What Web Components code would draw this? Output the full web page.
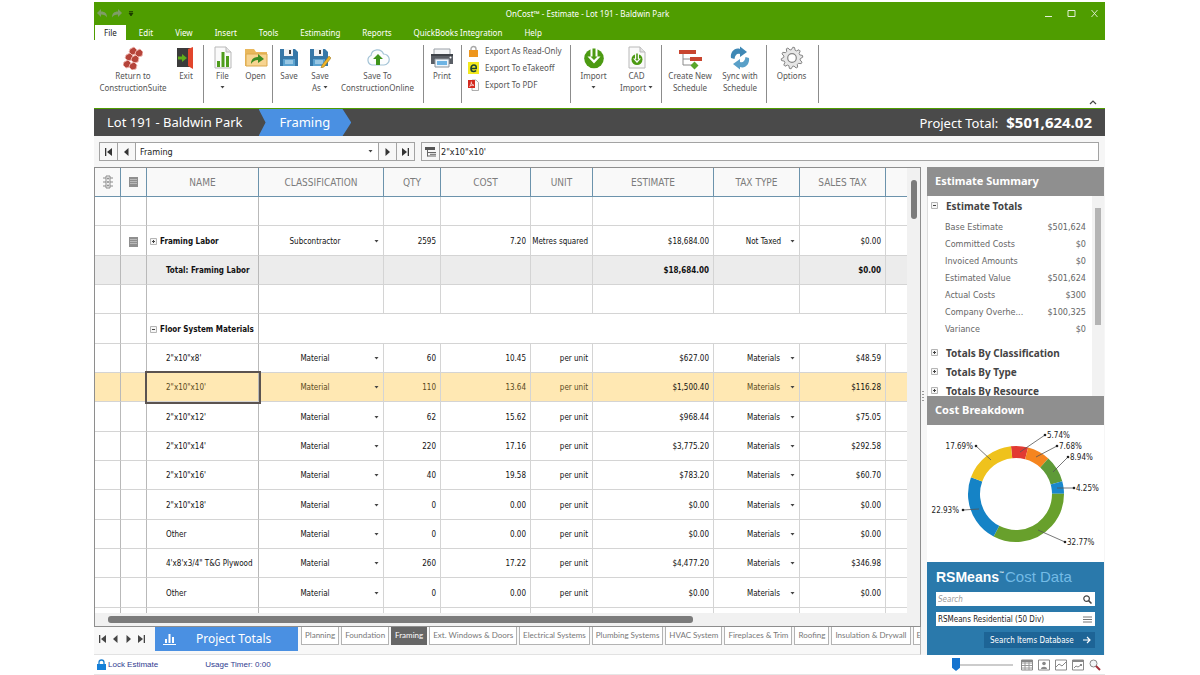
<!DOCTYPE html>
<html lang="en">
<head>
<meta charset="utf-8">
<title>OnCost™ - Estimate - Lot 191 - Baldwin Park</title>
<style>
  :root {
    --green: #4f9d00; --blue: #4a90e2; --dark: #4a4a4a; --line: #d4d4d4; --head-line: #6c93ac;
    --ui: "Noto Sans", "Open Sans", sans-serif;
    --data: "DejaVu Sans Condensed", "DejaVu Sans", sans-serif;
    --sans: "Liberation Sans", Arial, sans-serif;
    --tab: Lato, "Liberation Sans", sans-serif;
  }
  * { box-sizing: border-box; }
  body { margin: 0; background: #fff; font-family: var(--ui); font-size: 8px; color: #333; }
</style>
</head>
<body>
<app-window></app-window>

<script>
const BASE = `*{box-sizing:border-box}button,input,select{font:inherit;color:inherit;margin:0;padding:0;border:0;background:none;border-radius:0;outline:0}svg{display:block}a{color:inherit;text-decoration:none}`;

function define(name, markup, setup) {
  const template = document.createElement('template');
  template.innerHTML = markup.replace('<style>', '<style>' + BASE);
  customElements.define(name, class extends HTMLElement {
    constructor() {
      super();
      this.attachShadow({ mode: 'open' }).append(template.content.cloneNode(true));
    }
    connectedCallback() { if (setup) setup.call(this, this.shadowRoot); }
  });
}

const svg = (w, h, body, box) => `<svg width="${w}" height="${h}" viewBox="${box || `0 0 ${w} ${h}`}" aria-hidden="true">${body}</svg>`;

const hex = (x, y) => `<path d="M${x - 3} ${y - 2}L${x + 1} ${y - 4}L${x + 4} ${y - 1}L${x + 3} ${y + 3}L${x - 1} ${y + 4}L${x - 4} ${y + 1}Z"/>`;
const floppy = `<path d="M1 1h15l3 3v14H1z" fill="#3778a8"/><path d="M5 1h9v7H5z" fill="#f2f4f6"/><path d="M10 2h2v4h-2z" fill="#444"/><path d="M4 11h12v7H4z" fill="#5ba3d0"/><path d="M6 13h8M6 15h8" stroke="#d7ebf7"/>`;
const sheet = (x) => `<path d="M2 1h11l5 5v16H2z" fill="#fafafa" stroke="#b8b8b8"/><path d="M13 1v5h5" fill="#e4e4e4" stroke="#b8b8b8"/>` + x;

/* Outline of a ten-toothed gear centred on 12,12 */
const gearPath = Array.from({ length: 40 }, (_, i) => {
  const a = (i + 0.5) * Math.PI / 20, r = i % 4 < 2 ? 10.8 : 8.3;
  return `${i ? 'L' : 'M'}${(12 + r * Math.sin(a)).toFixed(2)} ${(12 - r * Math.cos(a)).toFixed(2)}`;
}).join('') + 'Z';

const ICONS = {
  suite: svg(20, 24, `<g fill="#b5443a" stroke="#f0b9b2" stroke-width=".9">${hex(10, 5)}${hex(16, 7)}${hex(6, 11)}${hex(12, 13)}${hex(4, 18)}${hex(10, 20)}</g>`),
  exit: svg(20, 24, `<path d="M1 2h13v19H1z" fill="#3b3b3b"/><path d="M12 3l5-2v22l-5-3z" fill="#e2452c"/><path d="M2 10.500h4V8l5 4-5 4v-2.500H2z" fill="#5fae1b"/>`),
  file: svg(20, 24, sheet(`<path d="M4 15h3v6H4zM8.500 6h3v15h-3zM13 10h3v11h-3z" fill="#4f9d1c"/>`)),
  open: svg(24, 24, `<path d="M1 3h9l2 3h11v14H1z" fill="#e9b85c"/><path d="M2 8h21v12H2z" fill="#f7d491" stroke="#dba94c"/><path d="M7 18c0-5 3-7 7-7V8l6 5-6 4v-3c-3 0-5 1-7 4z" fill="#3d8c23"/>`),
  save: svg(20, 20, floppy),
  saveas: svg(22, 20, floppy + `<path d="M20 8l2 2-7 9-3 1 1-3z" fill="#f0b429" stroke="#8d6a1c" stroke-width=".5"/>`),
  cloud: svg(24, 22, `<path d="M6 18a5 5 0 0 1-1-9.500 6.500 6.500 0 0 1 12.500-1.500A5.500 5.500 0 0 1 18 18z" fill="#fbfdfe" stroke="#a3c3d6" stroke-width="1.200"/><path d="M12 7l5 5h-3v6h-4v-6H7z" fill="#3f941b"/>`),
  print: svg(24, 22, `<path d="M4 2h16v6H4z" fill="#f4f6f8" stroke="#9aa0a6"/><path d="M1 7h22v10H1z" fill="#5a5f66"/><path d="M1 7h22v2H1z" fill="#3f444a"/><path d="M5 12h14v8H5z" fill="#eef6fc" stroke="#8a9299"/><path d="M7 14h10v4H7z" fill="#6db4e4"/><circle cx="20.500" cy="10.500" r="1" fill="#fff"/>`),
  lock: svg(11, 12, `<path d="M3 6V4a2.500 2.500 0 0 1 5 0v2" fill="none" stroke="#a8a8a8" stroke-width="1.400"/><path d="M1 5h9v7H1z" fill="#ee961d"/>`),
  etake: svg(11, 12, `<path d="M0 0h11v12H0z" fill="#f4ea1e"/><path d="M3 6.500h5.200C8.500 4 7.500 3 6 3 4 3 3 4.800 3 6.700 3 8.700 4.200 9.500 5.500 9.500c1.200 0 2-.4 2.600-1" fill="none" stroke="#1d4434" stroke-width="1.600"/>`),
  pdf: svg(11, 12, `<path d="M4 1h4l2.500 2.500v8H4z" fill="#fafafa" stroke="#999" stroke-width=".8"/><path d="M0 1h7v8H0z" fill="#d42a20"/><path d="M1.500 7.500C3 6 3.500 4 3.300 2.500M3.300 3.500C3.800 5.500 4.500 6 6 6.300M1.800 7.300C3 6.300 4.500 6 5.800 6.300" fill="none" stroke="#fff" stroke-width=".7"/>`),
  import: svg(22, 22, `<circle cx="11" cy="11.500" r="9.800" fill="#4c9a12"/><path d="M7.500 0h7v9.500h3L11 16.500 4.500 9.500h3z" fill="#fff"/><path d="M9.500 1.500h3v8h2L11 13 7.500 9.500h2z" fill="#4c9a12"/>`),
  cad: svg(20, 24, sheet(`<circle cx="10" cy="13.500" r="5.500" fill="#4c9a12"/><path d="M8 6h4v6.500h2L10 17l-4-4.500h2z" fill="#fafafa"/><path d="M9.200 7.500h1.600v5.500h1L10 15l-1.800-2h1z" fill="#4c9a12"/>`)),
  schedule: svg(24, 24, `<path d="M1 4h17v4H1zM12 11h12v4H12z" fill="#c8452f"/><path d="M5 8v5h7M5 13v6h9" fill="none" stroke="#8a8a8a" stroke-width="1"/><path d="M16.500 15.500l4 4-4 4-4-4z" fill="#5aa62b"/>`),
  sync: svg(22, 24, `<path d="M2 12C1 6 6 1 11 3V.5l7 5.500-7 5V8C8 7 6 9 5.500 13z" fill="#3f88b5"/><path d="M20 12c1 6-4 11-9 9v2.500L4 18l7-5v3c3 1 5-1 5.500-5z" fill="#5aa0c8"/>`),
  gear: svg(24, 24, `<path d="${gearPath}" fill="#e6e6e6" stroke="#858585" stroke-linejoin="round"/><circle cx="12" cy="12" r="4.300" fill="#fff" stroke="#858585" stroke-width="1.200"/>`),
  first: svg(9, 8, `<path d="M1 0h1.300v8H1zM8 0v8L3 4z" fill="currentColor"/>`),
  prev: svg(9, 8, `<path d="M6.500 0v8L2 4z" fill="currentColor"/>`),
  next: svg(9, 8, `<path d="M2.500 0v8L7 4z" fill="currentColor"/>`),
  last: svg(9, 8, `<path d="M6.700 0H8v8H6.700zM1 0v8l5-4z" fill="currentColor"/>`),
  outline: svg(11, 10, `<path d="M0 0h10v3H0z" fill="#555"/><path d="M2.500 3v6.500M2.500 5.500H11M2.500 9H11M5 7.300h6" stroke="#666" fill="none"/>`),
  traffic: svg(10, 14, `<path d="M3 1h4v12H3z" fill="#f4f4f4" stroke="#8b8b8b"/><path d="M0 3h3M7 3h3M0 7h3M7 7h3M0 11h3M7 11h3" stroke="#8b8b8b"/><circle cx="5" cy="3.500" r="1" fill="#8b8b8b"/><circle cx="5" cy="7" r="1" fill="#8b8b8b"/><circle cx="5" cy="10.500" r="1" fill="#8b8b8b"/>`),
  note: svg(9, 10, `<path d="M0 0h9v10H0z" fill="#8f8f8f"/><path d="M1 2.500h7M1 4.500h7M1 6.500h7" stroke="#b9b9b9"/>`),
  plus: svg(7, 7, `<path d="M.5.500h6v6h-6z" fill="#f6f6f6" stroke="#b4b4b4"/><path d="M2 3.500h3M3.500 2v3" stroke="#444"/>`),
  minus: svg(7, 7, `<path d="M.5.500h6v6h-6z" fill="#f6f6f6" stroke="#b4b4b4"/><path d="M2 3.500h3" stroke="#444"/>`),
  padlock: svg(9, 11, `<path d="M2 5V3.500a2.500 2.500 0 0 1 5 0V5" fill="none" stroke="#1b7fd0" stroke-width="1.300"/><path d="M0 5h9v6H0z" fill="#1580d8"/>`),
  bars: svg(13, 12, `<path d="M2 6h2v4H2zM5.500 1h2v9h-2zM9 4h2v6H9zM0 11h13v1H0z" fill="#fff"/>`),
  search: svg(9, 9, `<circle cx="3.600" cy="3.600" r="2.800" fill="none" stroke="#444" stroke-width="1.200"/><path d="M5.600 5.600L8.500 8.500" stroke="#444" stroke-width="1.500"/>`),
  menu: svg(9, 7, `<path d="M0 1h9M0 3.500h9M0 6h9" stroke="#777"/>`),
  arrow: svg(8, 8, `<path d="M0 4h7M4 1l3 3-3 3" fill="none" stroke="#fff" stroke-width="1.200"/>`),
  caret: svg(5, 3, `<path d="M.5 0h4L2.500 2.400z" fill="#444"/>`),
};
class UiIcon extends HTMLElement {
  connectedCallback() {
    if (!this.shadowRoot) this.attachShadow({ mode: 'open' });
    this.shadowRoot.innerHTML = `<style>:host{display:block;flex:none}svg{display:block}</style>` + ICONS[this.getAttribute('name')];
  }
}
customElements.define('ui-icon', UiIcon);
const icon = (name) => `<ui-icon name="${name}"></ui-icon>`;

/* ---------- title bar and menu ---------- */
define('title-bar', `<style>
  :host{display:block;background:var(--green);color:#fff}
  .top{display:grid;grid-template-columns:1fr auto 1fr;height:23px;align-items:center}
  .quick{display:flex;gap:5px;padding-left:3px}
  .title{font-size:8px;padding-right:24px}
  .win{display:flex;justify-content:flex-end;gap:14px;padding-right:6px}
  button{display:block}
  nav{display:flex;height:15px;align-items:stretch;padding-left:1px}
  nav a{padding:0 11px;line-height:15px;font-size:8px}
  nav a.on{background:#fff;color:#222;padding:0 9px;margin-right:2px}
</style>
<div class="top">
  <div class="quick">
    <button aria-label="Undo">${svg(10, 9, `<path d="M0 4l4-4v2.500c4 0 6 2 6 6-1-2-3-3-6-3V8z" fill="#7f9d66"/>`)}</button>
    <button aria-label="Redo">${svg(10, 9, `<path d="M10 4L6 0v2.500c-4 0-6 2-6 6 1-2 3-3 6-3V8z" fill="#7f9d66"/>`)}</button>
    <button aria-label="Customize">${svg(7, 9, `<path d="M2 2.500h4M2 4h4L4 7z" stroke="#1c3a00" fill="#1c3a00" stroke-width=".8"/>`)}</button>
  </div>
  <div class="title">OnCost™ - Estimate - Lot 191 - Baldwin Park</div>
  <div class="win">
    <button aria-label="Minimize">${svg(9, 9, `<path d="M1 7.500h7" stroke="#e4f0d8"/>`)}</button>
    <button aria-label="Maximize">${svg(9, 9, `<path d="M1 1.500h7v6H1z" fill="none" stroke="#e4f0d8"/>`)}</button>
    <button aria-label="Close">${svg(9, 9, `<path d="M1.500 1l6 7M7.500 1l-6 7" stroke="#e4f0d8" stroke-width=".9"/>`)}</button>
  </div>
</div>
<nav><a class="on" href="#file">File</a><a href="#edit">Edit</a><a href="#view">View</a><a href="#insert">Insert</a><a href="#tools">Tools</a><a href="#estimating">Estimating</a><a href="#reports">Reports</a><a href="#qb">QuickBooks Integration</a><a href="#help">Help</a></nav>`);

/* ---------- ribbon ---------- */
define('ribbon-group', `<style>
  :host{display:flex;align-items:flex-start;border-right:1px solid #8c8c8c;height:58px;flex:none}
</style><slot></slot>`);

define('ribbon-button', `<style>
  :host{display:block;flex:none;width:var(--w)}
  button{width:100%;display:flex;flex-direction:column;align-items:center;font-size:8px;line-height:12px;color:#555;text-align:center;white-space:nowrap}
  .pic{height:25px;display:flex;align-items:center}
</style><button><span class="pic"><slot name="icon"></slot></span><span><slot></slot></span></button>`);

define('ribbon-bar', `<style>
  :host{display:flex;height:69px;padding-top:5px;background:#fff;border-bottom:1px solid var(--green)}
  .exports{display:flex;flex-direction:column;gap:5px;padding:0 8px 0 6px}
  .exports button{display:flex;align-items:center;gap:6px;height:12px;line-height:10px;font-size:8px;color:#555;white-space:nowrap}
  .fold{margin:auto 8px 3px auto}
  .c{display:inline-flex;vertical-align:2px}
  ribbon-group{padding-right:var(--pad,0)}
</style>
<ribbon-group style="--pad:3px">
  <ribbon-button style="--w:78px"><ui-icon slot="icon" name="suite"></ui-icon>Return to<br>ConstructionSuite</ribbon-button>
  <ribbon-button style="--w:28px"><ui-icon slot="icon" name="exit"></ui-icon>Exit</ribbon-button>
</ribbon-group>
<ribbon-group style="--pad:2px">
  <ribbon-button style="--w:37px"><ui-icon slot="icon" name="file"></ui-icon>File<br><span class="c">${icon('caret')}</span></ribbon-button>
  <ribbon-button style="--w:29px"><ui-icon slot="icon" name="open"></ui-icon>Open</ribbon-button>
</ribbon-group>
<ribbon-group style="--pad:3px">
  <ribbon-button style="--w:32px"><ui-icon slot="icon" name="save"></ui-icon>Save</ribbon-button>
  <ribbon-button style="--w:30px"><ui-icon slot="icon" name="saveas"></ui-icon>Save<br>As <span class="c">${icon('caret')}</span></ribbon-button>
  <ribbon-button style="--w:85px"><ui-icon slot="icon" name="cloud"></ui-icon>Save To<br>ConstructionOnline</ribbon-button>
</ribbon-group>
<ribbon-group style="--pad:1px">
  <ribbon-button style="--w:36px"><ui-icon slot="icon" name="print"></ui-icon>Print</ribbon-button>
</ribbon-group>
<ribbon-group>
  <div class="exports">
    <button>${icon('lock')}Export As Read-Only</button>
    <button>${icon('etake')}Export To eTakeoff</button>
    <button>${icon('pdf')}Export To PDF</button>
  </div>
</ribbon-group>
<ribbon-group style="--pad:4px">
  <ribbon-button style="--w:46px"><ui-icon slot="icon" name="import"></ui-icon>Import<br><span class="c">${icon('caret')}</span></ribbon-button>
  <ribbon-button style="--w:40px"><ui-icon slot="icon" name="cad"></ui-icon>CAD<br>Import <span class="c">${icon('caret')}</span></ribbon-button>
</ribbon-group>
<ribbon-group style="--pad:4px">
  <ribbon-button style="--w:57px"><ui-icon slot="icon" name="schedule"></ui-icon>Create New<br>Schedule</ribbon-button>
  <ribbon-button style="--w:43px"><ui-icon slot="icon" name="sync"></ui-icon>Sync with<br>Schedule</ribbon-button>
</ribbon-group>
<ribbon-group style="--pad:1px">
  <ribbon-button style="--w:50px"><ui-icon slot="icon" name="gear"></ui-icon>Options</ribbon-button>
</ribbon-group>
<button class="fold" aria-label="Collapse ribbon">${svg(8, 6, `<path d="M1 5l3-3 3 3" fill="none" stroke="#444" stroke-width="1.200"/>`)}</button>`);

/* ---------- breadcrumb ---------- */
define('crumb-bar', `<style>
  :host{display:flex;height:27px;background:var(--dark);color:#fff;align-items:center;font-size:13px;line-height:27px;padding:0 13px}
  .crumb{padding-right:16px}
  .leaf{height:27px;background:var(--blue);padding:0 21px;clip-path:polygon(0 0,84px 0,100% 50%,84px 100%,0 100%,7px 50%)}
  .total{margin-left:auto;display:flex;gap:8px;align-items:baseline}
  b{font-size:15px}
</style>
<a class="crumb" href="#lot">Lot 191 - Baldwin Park</a><a class="leaf" href="#framing">Framing</a>
<div class="total"><span>Project Total:</span><b>$501,624.02</b></div>`);

/* ---------- sheet picker and formula box ---------- */
define('formula-bar', `<style>
  :host{display:flex;gap:6px;padding:6px 6px 6px 5px;background:#f6f6f6;font-family:var(--data);font-size:9px;color:#222}
  .box{display:flex;height:19px;border:1px solid #a3a3a3;background:#fff}
  .box button{width:18px;display:grid;place-items:center;border-right:1px solid #a3a3a3;color:#333;background:#f7f7f7}
  .box .r{border-right:0;border-left:1px solid #a3a3a3}
  .pick{position:relative;display:block;width:242px}
  .pick ui-icon{position:absolute;right:5px;top:7px}
  select{appearance:none;width:100%;height:17px;padding-left:4px}
  .grow{flex:1}
  input{flex:1;min-width:0;padding-left:1px}
</style>
<div class="box"><button aria-label="First sheet">${icon('first')}</button><button aria-label="Previous sheet">${icon('prev')}</button>
<label class="pick"><select aria-label="Sheet"><option>Framing</option><option>Planning</option><option>Foundation</option></select>${icon('caret')}</label>
<button class="r" aria-label="Next sheet">${icon('next')}</button><button class="r" aria-label="Last sheet">${icon('last')}</button></div>
<div class="box grow"><button aria-label="Insert item">${icon('outline')}</button><input aria-label="Cell value" value="2&quot;x10&quot;x10'"></div>`);

/* ---------- estimate grid ---------- */
const ROWS = [
  { kind: 'empty' },
  { kind: 'item', open: 'plus', note: true, name: 'Framing Labor', cls: 'Subcontractor', qty: '2595', cost: '7.20', unit: 'Metres squared', est: '$18,684.00', tax: 'Not Taxed', sales: '$0.00' },
  { kind: 'total', name: 'Total: Framing Labor', est: '$18,684.00', sales: '$0.00' },
  { kind: 'empty' },
  { kind: 'group', name: 'Floor System Materials' },
  ...[
    [`2"x10"x8'`, '60', '10.45', '$627.00', '$48.59'],
    [`2"x10"x10'`, '110', '13.64', '$1,500.40', '$116.28'],
    [`2"x10"x12'`, '62', '15.62', '$968.44', '$75.05'],
    [`2"x10"x14'`, '220', '17.16', '$3,775.20', '$292.58'],
    [`2"x10"x16'`, '40', '19.58', '$783.20', '$60.70'],
    [`2"x10"x18'`, '0', '0.00', '$0.00', '$0.00'],
    ['Other', '0', '0.00', '$0.00', '$0.00'],
    [`4'x8'x3/4" T&G Plywood`, '260', '17.22', '$4,477.20', '$346.98'],
    ['Other', '0', '0.00', '$0.00', '$0.00'],
  ].map(([name, qty, cost, est, sales]) => ({ kind: 'item', name, cls: 'Material', qty, cost, unit: 'per unit', est, tax: 'Materials', sales, selected: qty === '110' })),
];
const esc = (s) => s.replace(/&/g, '&amp;');
const picker = (cls, label, value, others) => `<td class="${cls}"><span class="drop"><select aria-label="${label}">${[value, ...others.filter(o => o !== value)].map(o => `<option>${o}</option>`).join('')}</select>${icon('caret')}</span></td>`;
const rowHtml = (r) => {
  if (r.kind === 'empty') return `<tr>${'<td></td>'.repeat(11)}</tr>`;
  if (r.kind === 'group') return `<tr><td></td><td></td><td class="name"><span class="tree">${icon('minus')}<b>${r.name}</b></span></td><td colspan="8"></td></tr>`;
  if (r.kind === 'total') return `<tr class="total"><td></td><td></td><td class="name child">${r.name}</td><td></td><td></td><td></td><td></td><td class="num">${r.est}</td><td></td><td class="num">${r.sales}</td><td></td></tr>`;
  const name = r.open ? `<td class="name"><span class="tree">${icon(r.open)}<b>${r.name}</b></span></td>` : `<td class="name child">${esc(r.name)}</td>`;
  return `<tr${r.selected ? ' class="sel"' : ''}><td></td><td class="mid">${r.note ? icon('note') : ''}</td>${name}${picker('cls', 'Classification', r.cls, ['Material', 'Subcontractor', 'Labor'])}<td class="num">${r.qty}</td><td class="num">${r.cost}</td><td class="num">${r.unit}</td><td class="num">${r.est}</td>${picker('tax', 'Tax type', r.tax, ['Materials', 'Not Taxed'])}<td class="num">${r.sales}</td><td></td></tr>`;
};

define('estimate-grid', `<style>
  :host{display:grid;grid-template-columns:minmax(0,1fr) 13px;grid-template-rows:minmax(0,1fr) 13px;border:1px solid #8e8e8e;background:#f1f1f1;font-family:var(--data);font-size:8px;color:#111}
  .view{background:#fff;overflow:hidden}
  table{width:100%;height:100%;border-collapse:separate;border-spacing:0;table-layout:fixed}
  th{height:29px;padding:0;font-weight:400;font-size:10px;color:#7c7c7c;background:#f9f9f9;border-right:1px solid var(--head-line);border-bottom:1px solid var(--head-line)}
  td{padding:2px 0 0;border-right:1px solid var(--line);border-bottom:1px solid var(--line);white-space:nowrap;line-height:16px}
  th:last-child,td:last-child{border-right:0}
  td:nth-child(-n+3){border-right-color:#b9b9b9}
  td:first-child::before{content:"";display:block;height:16px}
  tr.end td{height:5px;padding:0;border-bottom:0}
  tr.end td::before{display:none}
  th ui-icon,.mid ui-icon{margin:auto;width:max-content}
  .tree{display:flex;align-items:center;gap:3px;padding-left:3px}
  .child{padding-left:19px}
  .num{text-align:right;padding-right:4px}
  .drop{display:block;position:relative}
  .drop ui-icon{position:absolute;right:4px;top:6px}
  select{appearance:none;display:block;width:100%;height:16px;line-height:16px;text-align:center;text-align-last:center}
  .cls select{padding-right:12px}
  .tax select{padding-left:14px}
  .total td{background:#ececec;font-weight:700}
  .sel td{background:#ffe8b3;color:#5a4a22}
  .sel td:nth-child(8),.sel td:nth-child(10){color:#111}
  .sel .name{outline:2px solid #5b5350}
  .v{padding:12px 0 0 4px}.v i{display:block;width:6px;height:39px;border-radius:3px;background:#7b7b7b}
  .h{grid-column:1/3;padding:3px 0 0 13px}.h i{display:block;width:72%;height:7px;border-radius:3px;background:#7b7b7b}
</style>
<div class="view"><table>
<colgroup><col style="width:26px"><col style="width:26px"><col style="width:112px"><col style="width:125px"><col style="width:57px"><col style="width:90px"><col style="width:62px"><col style="width:121px"><col style="width:86px"><col style="width:86px"><col></colgroup>
<thead><tr><th aria-label="Status">${icon('traffic')}</th><th aria-label="Notes">${icon('note')}</th><th>NAME</th><th>CLASSIFICATION</th><th>QTY</th><th>COST</th><th>UNIT</th><th>ESTIMATE</th><th>TAX TYPE</th><th>SALES TAX</th><th></th></tr></thead>
<tbody>${ROWS.map(rowHtml).join('')}<tr class="end">${'<td></td>'.repeat(11)}</tr></tbody>
</table></div><div class="v"><i></i></div><div class="h"><i></i></div>`);

/* ---------- sheet tabs ---------- */
define('sheet-tabs', `<style>
  :host{display:flex;height:28px;background:#f8f8f8;border-right:1px solid #b5b5b5;border-bottom:1px solid #e2e2e2;align-items:flex-start;overflow:hidden;white-space:nowrap}
  .nav{display:flex;gap:4px;padding:8px 9px 0 4px;color:#444}
  .nav ui-icon{width:9px}
  .main{width:143px;height:24px;flex:none;background:var(--blue);color:#fff;font-size:12px;display:flex;align-items:center;padding-left:8px;gap:20px;line-height:24px;margin-right:3px}
  .tabs{display:flex;gap:2px;font-family:var(--tab);font-size:8px;color:#777}
  .tabs a{height:18px;line-height:17px;padding:0 3px;border:1px solid #b3b3b3;border-top:0;background:#fff}
  .tabs a.on{background:#666;border-color:#666;color:#fff}
</style>
<div class="nav"><button aria-label="First">${icon('first')}</button><button aria-label="Previous">${icon('prev')}</button><button aria-label="Next">${icon('next')}</button><button aria-label="Last">${icon('last')}</button></div>
<button class="main">${icon('bars')}<span>Project Totals</span></button>
<div class="tabs"><a href="#1">Planning</a><a href="#2">Foundation</a><a class="on" href="#3">Framing</a><a href="#4">Ext. Windows &amp; Doors</a><a href="#5">Electrical Systems</a><a href="#6">Plumbing Systems</a><a href="#7">HVAC System</a><a href="#8">Fireplaces &amp; Trim</a><a href="#9">Roofing</a><a href="#10">Insulation &amp; Drywall</a><a href="#11">E</a></div>`);

/* ---------- side panel ---------- */
define('side-section', `<style>
  :host{display:block}
  h2{margin:0;height:29px;line-height:28px;padding-left:8px;background:#8f8f8f;color:#fff;font-size:11px;font-weight:700}
</style><h2><slot name="title"></slot></h2><slot></slot>`);

define('summary-tree', `<style>
  :host{display:flex;height:200px;overflow:hidden;font-family:var(--data);background:#fff;border-left:1px solid #ddd}
  .list{flex:1;padding:0 6px 0 3px}
  .bar{width:12px;background:#f2f2f2;padding:12px 3px 0}
  .bar i{display:block;height:117px;background:#b4b4b4}
  h3{margin:0;height:19px;line-height:18px;display:flex;align-items:center;gap:8px;font-family:var(--ui);font-size:10px;color:#444}
  dl{margin:0;padding:4px 0 5px 14px;font-size:9px;color:#666}
  dl div{display:flex;justify-content:space-between;height:17px;line-height:17px}
  dd{margin:0}
</style>
<div class="list"><h3>${icon('minus')}Estimate Totals</h3>
<dl><div><dt>Base Estimate</dt><dd>$501,624</dd></div><div><dt>Committed Costs</dt><dd>$0</dd></div><div><dt>Invoiced Amounts</dt><dd>$0</dd></div><div><dt>Estimated Value</dt><dd>$501,624</dd></div><div><dt>Actual Costs</dt><dd>$300</dd></div><div><dt>Company Overhe...</dt><dd>$100,325</dd></div><div><dt>Variance</dt><dd>$0</dd></div></dl>
<h3>${icon('plus')}Totals By Classification</h3><h3>${icon('plus')}Totals By Type</h3><h3>${icon('plus')}Totals By Resource</h3></div>
<div class="bar"><i></i></div>`);

const SLICES = [[5.74, '#e23a32'], [7.68, '#f5851f'], [8.94, '#5e9a38'], [4.25, '#1987cc'], [32.77, '#68a02c'], [22.93, '#1583c6'], [17.69, '#efc21c']];
let offset = 0;
const arcs = SLICES.map(([value, color]) => {
  const arc = `<circle cx="89" cy="69" r="42" fill="none" stroke="${color}" stroke-width="12" pathLength="100" stroke-dasharray="${value} ${100 - value}" stroke-dashoffset="${-offset}" transform="rotate(-96 89 69)"/>`;
  offset += value;
  return arc;
}).join('');
const LABELS = [['5.74%', 118, 10, 93, 27, 120], ['7.68%', 130, 21, 109, 32, 132], ['8.94%', 141, 32, 126, 47, 143], ['4.25%', 147, 63, 130, 63, 149], ['32.77%', 138, 117, 111, 105, 140], ['22.93%', 36, 85, 52, 84, 32], ['17.69%', 49, 21, 64, 35, 46]];
define('cost-chart', `<style>
  :host{display:block;height:137px;background:#fff}
  svg{margin:auto} text{font:8px var(--data);fill:#222}
</style><svg width="177" height="137" viewBox="0 0 177 137" role="img" aria-label="Cost breakdown">${arcs}
${LABELS.map(([t, x, y, x2, y2, tx]) => `<path d="M${x} ${y}L${x2} ${y2}" stroke="#555" stroke-width=".8"/><circle cx="${x}" cy="${y}" r="1.300" fill="#222"/><text x="${tx}" y="${y + 3}" text-anchor="${tx < x ? 'end' : 'start'}">${t}</text>`).join('')}</svg>`);

define('cost-search', `<style>
  :host{display:flex;flex-direction:column;background:#2a79ab;padding:6px 9px 7px;font-family:var(--data);font-size:8px}
  .brand{display:flex;align-items:baseline;height:18px;color:#fff;font:700 14px/18px var(--sans);margin-bottom:6px}
  .brand span{font-size:15px;font-weight:400;color:#74bbe6;padding-left:1px}
  .brand sup{font-size:5px;line-height:5px;align-self:flex-start;margin-top:3px}
  label{display:flex;align-items:center;height:14px;background:#fff;padding:0 3px 0 2px;color:#222;margin-bottom:6px}
  label input,label select{flex:1;min-width:0;height:14px;appearance:none}
  input::placeholder{font-style:italic;color:#999}
  button{align-self:flex-end;width:111px;height:16px;background:#1d6496;color:#fff;display:flex;align-items:center;justify-content:space-between;padding:0 4px 0 6px}
</style>
<div class="brand">RSMeans<sup>™</sup><span>Cost Data</span></div>
<label><input aria-label="Search cost data" placeholder="Search">${icon('search')}</label>
<label><select aria-label="Cost book"><option>RSMeans Residential (50 Div)</option></select>${icon('menu')}</label>
<button>Search Items Database${icon('arrow')}</button>`);

/* ---------- status bar ---------- */
const frame = (x) => svg(12, 12, `<path d="M.5 1h11v10H.5z" fill="#fff" stroke="#8a8a8a"/>` + x);
define('status-bar', `<style>
  :host{display:flex;height:20px;align-items:center;padding:0 4px 0 3px;border-bottom:1px solid #e6e6e6;font-family:var(--sans);font-size:8px;color:#2f3b8f;background:#fff}
  .lock{display:flex;align-items:center;gap:2px}
  .time{margin-left:47px}
  .tools{display:flex;align-items:center;gap:5px;margin-left:auto}
  input{appearance:none;width:61px;height:14px;background:linear-gradient(#ccc,#ccc) center/100% 2px no-repeat;margin-right:3px}
  input::-webkit-slider-thumb{appearance:none;width:8px;height:13px;background:#1573cf;clip-path:polygon(0 0,100% 0,100% 75%,50% 100%,0 75%)}
</style>
<button class="lock">${icon('padlock')}Lock Estimate</button><span class="time">Usage Timer: 0:00</span>
<div class="tools"><input type="range" min="0" max="100" value="0" aria-label="Zoom">
<button aria-label="Table view">${frame('<path d="M1 4h10M1 6.500h10M1 9h10M4 2v9M8 2v9" stroke="#9a9a9a"/><path d="M1 1h10v2H1z" fill="#888"/>')}</button>
<button aria-label="Contact view">${frame('<circle cx="6" cy="4.500" r="1.800" fill="#888"/><path d="M3 10c0-3 6-3 6 0z" fill="#888"/>')}</button>
<button aria-label="Chart view">${frame('<path d="M1 8l3-3 3 2 4-4" fill="none" stroke="#888"/>')}</button>
<button aria-label="Report view">${frame('<path d="M1 1h10v2H1zM8 5h2v2H8z" fill="#888"/><path d="M2 9l2-2 2 1 3-2" fill="none" stroke="#888"/>')}</button>
<button aria-label="Find">${svg(12, 12, `<circle cx="4.500" cy="4.500" r="3.500" fill="#f3f6f8" stroke="#888"/><path d="M7 7l4 4" stroke="#a3303a" stroke-width="2"/>`)}</button></div>`);

/* ---------- window ---------- */
define('app-window', `<style>
  :host{display:flex;flex-direction:column;margin:0 95px 0 94px;min-height:100vh;padding:2px 0 1px}
  main{flex:1;display:grid;grid-template-columns:minmax(0,1fr) 177px;column-gap:6px;background:#f6f6f6;padding-right:1px}
  .left{display:flex;flex-direction:column;min-height:0;position:relative}
  estimate-grid{flex:1}
  .right{display:flex;flex-direction:column;background:#fff}
  side-section,cost-search{flex:none}
  .grip{position:absolute;left:calc(100% + 1px);top:46%;width:2px;height:11px;background:repeating-linear-gradient(#999 0 1px,#f6f6f6 1px 3px)}
</style>
<title-bar></title-bar><ribbon-bar></ribbon-bar><crumb-bar></crumb-bar><formula-bar></formula-bar>
<main><div class="left"><estimate-grid></estimate-grid><sheet-tabs></sheet-tabs><div class="grip"></div></div>
<div class="right"><side-section><span slot="title">Estimate Summary</span><summary-tree></summary-tree></side-section>
<side-section><span slot="title">Cost Breakdown</span><cost-chart></cost-chart></side-section><cost-search></cost-search></div></main>
<status-bar></status-bar>`);
</script>
</body>
</html>
